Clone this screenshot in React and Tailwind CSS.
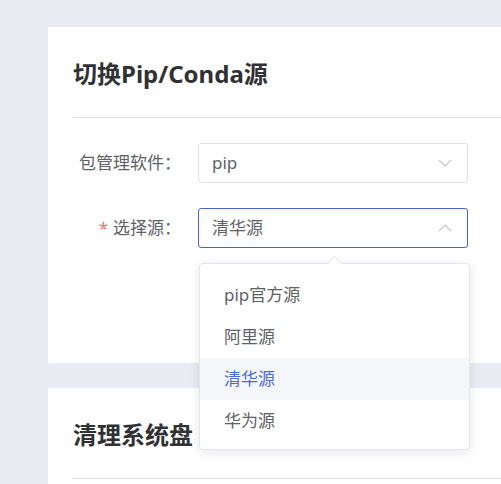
import React from "react";

const sources = ["pip官方源", "阿里源", "清华源", "华为源"];

function Chevron({ up }) {
  return (
    <svg width="14" height="8" viewBox="0 0 14 8" className="shrink-0">
      <polyline
        points={up ? "1,7 7,1 13,7" : "1,1 7,7 13,1"}
        fill="none"
        stroke="#c0c4cc"
        strokeWidth="1.1"
      />
    </svg>
  );
}

function Row({ label, required, children }) {
  return (
    <div className="flex items-center h-[40px]">
      <div className="w-[125px] pr-[17px] text-right text-[17px] text-[#606266] shrink-0">
        {required && <span className="text-[#f56c6c] mr-[5px]">*</span>}
        {label}
      </div>
      {children}
    </div>
  );
}

export default function App() {
  return (
    <div
      className="w-[501px] h-[484px] overflow-hidden bg-[#e9ecf3] pt-[27px] pl-[48px]"
      style={{ fontFamily: '"Noto Sans", "Noto Sans CJK SC", sans-serif' }}
    >
      {/* card 1 */}
      <div className="w-[520px] h-[336px] bg-white pl-[25px] pt-[30px]">
        <h2 className="h-[34px] leading-[34px] text-[24px] font-bold text-[#303133]">
          切换Pip/Conda源
        </h2>
        <div className="mt-[26px] h-px bg-[#dcdfe6]" />

        <div className="mt-[25px] flex flex-col gap-[25px]">
          <Row label="包管理软件：">
            <div className="w-[270px] h-[40px] border border-[#dcdfe6] rounded-[3px] flex items-center justify-between pl-[13px] pr-[15px] text-[17px] text-[#606266]">
              <span>pip</span>
              <Chevron />
            </div>
          </Row>

          <Row label="选择源：" required>
            <div className="relative">
              <div className="w-[270px] h-[40px] border border-[#4466cc] rounded-[3px] flex items-center justify-between pl-[13px] pr-[15px] text-[17px] text-[#606266]">
                <span>清华源</span>
                <Chevron up />
              </div>

              {/* dropdown */}
              <div className="absolute z-10 left-[1px] top-[55px] w-[271px] bg-white border border-[#e4e7ed] rounded-[4px] shadow-[0_2px_12px_rgba(0,0,0,0.1)] pt-[10px] pb-[7px]">
                <div className="absolute -top-[6px] left-[129px] w-[11px] h-[11px] bg-white border-l border-t border-[#e4e7ed] rotate-45" />
                {sources.map((s) => (
                  <div
                    key={s}
                    className={
                      s === "清华源"
                        ? "h-[42px] flex items-center pl-[24px] text-[17px] bg-[#f4f6fa] text-[#4d6bd6]"
                        : "h-[42px] flex items-center pl-[24px] text-[17px] text-[#606266]"
                    }
                  >
                    {s}
                  </div>
                ))}
              </div>
            </div>
          </Row>
        </div>
      </div>

      {/* card 2 */}
      <div className="mt-[25px] w-[520px] h-[200px] bg-white pl-[25px] pt-[30px]">
        <h2 className="h-[34px] leading-[34px] text-[24px] font-bold text-[#303133]">
          清理系统盘
        </h2>
        <div className="mt-[26px] h-px bg-[#dcdfe6]" />
      </div>
    </div>
  );
}
